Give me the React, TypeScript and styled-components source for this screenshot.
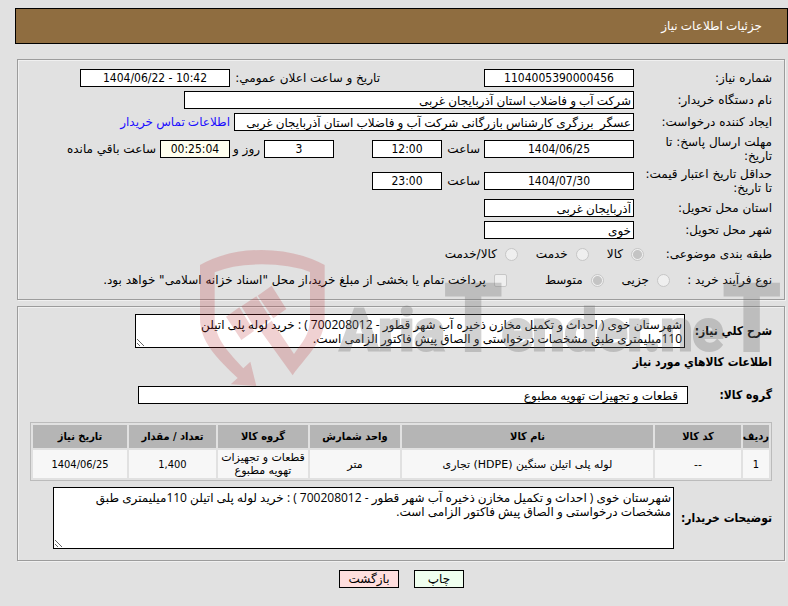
import React from "react";
import styled, { createGlobalStyle } from "styled-components";

const GlobalStyle = createGlobalStyle`
  * { box-sizing: border-box; }
  body {
    margin: 0;
    background: #e1e1e1;
    color: #000;
    font: 12px/14px "DejaVu Sans", sans-serif;
  }
  input, textarea, button { font: inherit; color: inherit; }
`;

const condensed = `"DejaVu Sans Condensed", "DejaVu Sans", sans-serif`;
const valueFont = `"Open Sans", "DejaVu Sans", sans-serif`;

const Page = styled.main`
  position: relative;
  padding: 8px 0 18px;
`;

const TitleBar = styled.header`
  margin-left: 15px;
  height: 36px;
  padding: 0 25px;
  display: flex;
  align-items: center;
  background: #8f6d40;
  border: 1px solid #000;
  color: #fff;
`;

const Title = styled.h1`
  margin: 0;
  font-family: ${valueFont};
  font-size: 12px;
  font-weight: normal;
`;

const Panel = styled.section<{ $top: number; $bottom: number }>`
  margin: ${(p) => p.$top}px 3px 0 17px;
  padding: 7px 12px ${(p) => p.$bottom}px;
  border: 1px solid #9c9c9c;
  box-shadow: inset 1px 1px 0 #f0f0f0, 1px 1px 0 #f0f0f0;
`;

const Row = styled.div<{ $height?: number; $gap?: number }>`
  display: flex;
  align-items: center;
  gap: ${(p) => p.$gap ?? 4}px;
  min-height: ${(p) => p.$height ?? 22}px;
`;

const Label = styled.label<{ $width?: number }>`
  flex: none;
  width: ${(p) => (p.$width ? `${p.$width}px` : "auto")};
  white-space: nowrap;
`;

const StrongLabel = styled(Label)`
  font-family: ${condensed};
  font-weight: bold;
`;

const RowLabel = styled(Label)`
  width: 134px;
  white-space: normal;
`;

const Field = styled.input<{ $width: number; $center?: boolean; $tint?: string; $indent?: number }>`
  width: ${(p) => p.$width}px;
  height: 18px;
  min-width: 0;
  padding: 0 ${(p) => p.$indent ?? 2}px;
  border: 1px solid #000;
  border-radius: 0;
  background: ${(p) => p.$tint ?? "#fff"};
  font-family: ${(p) => (p.$center ? condensed : valueFont)};
  text-align: ${(p) => (p.$center ? "center" : "right")};
  outline: none;
`;

const Area = styled.textarea<{ $width: number; $height: number }>`
  width: ${(p) => p.$width}px;
  height: ${(p) => p.$height}px;
  min-width: 0;
  padding: 3px 2px;
  border: 1px solid #000;
  border-radius: 0;
  background: #fff;
  font-family: ${valueFont};
  overflow: hidden;
  outline: none;
`;

const Link = styled.a`
  color: #1a0dff;
  font-family: ${valueFont};
  text-decoration: none;
  white-space: nowrap;
`;

const AfterGap = styled.div<{ $gap: number }>`
  display: flex;
  align-items: center;
  gap: 4px;
  margin-right: ${(p) => p.$gap}px;
`;

const Options = styled.div`
  display: flex;
  gap: 18px;
`;

const Option = styled.label`
  display: flex;
  align-items: center;
  gap: 8px;
  white-space: nowrap;
`;

const Mark = styled.input`
  appearance: none;
  flex: none;
  width: 13px;
  height: 13px;
  margin: 0;
  border: 1px solid #c6c6c6;
  border-radius: ${(p) => (p.type === "radio" ? "50%" : "2px")};
  background: #efefef;
  &:checked {
    background: radial-gradient(circle, #c4c4c4 0 4px, #efefef 5px);
  }
`;

const Heading = styled.h2`
  margin: 7px 0 0;
  font-family: ${condensed};
  font-size: 12px;
  line-height: 14px;
`;

const GroupRow = styled(Row)`
  margin-top: 15px;
`;

const Goods = styled.table`
  width: 100%;
  margin-top: 16px;
  table-layout: fixed;
  border: 1px solid #bbb;
  border-spacing: 2px;
  font-size: 11px;
  text-align: center;
`;

const Col = styled.col<{ $width?: number }>`
  width: ${(p) => (p.$width ? `${p.$width}px` : "auto")};
`;

const HeadCell = styled.th`
  height: 23px;
  padding: 0;
  background: #b5b5b5;
  font-family: ${condensed};
  white-space: nowrap;
`;

const Cell = styled.td<{ $numeric: boolean }>`
  height: 28px;
  padding: 0;
  background: #f7f7f7;
  font-family: ${(p) => (p.$numeric ? condensed : "inherit")};
  line-height: 13px;
`;

const NoteRow = styled(Row)`
  margin-top: 6px;
`;

const Actions = styled.div`
  display: flex;
  justify-content: center;
  gap: 15px;
  margin: 9px 0 0 15px;
`;

const Action = styled.button<{ $width: number; $tint: string }>`
  width: ${(p) => p.$width}px;
  height: 18px;
  padding: 0;
  border: 1px solid #000;
  background: ${(p) => p.$tint};
`;

const Watermark = styled.svg`
  position: absolute;
  top: 235px;
  right: 0;
  width: 608px;
  height: 165px;
  direction: ltr;
  pointer-events: none;
`;

const WatermarkText = styled.text`
  font-family: Roboto, sans-serif;
  font-weight: bold;
  font-size: 57px;
  fill: rgb(110, 110, 110);
  stroke: rgb(110, 110, 110);
  stroke-width: 3px;
  opacity: 0.3;
`;

const Capital = styled.tspan`
  font-size: 92px;
`;

const columns = [26, 86, undefined, 90, 90, 87, 94];
const heads = ["ردیف", "کد کالا", "نام کالا", "واحد شمارش", "گروه کالا", "تعداد / مقدار", "تاریخ نیاز"];
const goods = [
  ["1", "--", "لوله پلی اتیلن سنگین (HDPE) تجاری", "متر", "قطعات و تجهیزات تهویه مطبوع", "1,400", "1404/06/25"],
];
const description =
  "شهرستان خوی ( احداث و تکمیل مخازن ذخیره آب شهر قطور - 700208012 ) : خرید لوله پلی اتیلن 110میلیمتری طبق مشخصات درخواستی و الصاق پیش فاکتور الزامی است.";

export default function App() {
  return (
    <Page dir="rtl" lang="fa">
      <GlobalStyle />
      <TitleBar>
        <Title>جزئیات اطلاعات نیاز</Title>
      </TitleBar>

      <Panel $top={15} $bottom={6}>
        <Row>
          <RowLabel htmlFor="number">شماره نیاز:</RowLabel>
          <Field id="number" $width={150} $center readOnly value="1104005390000456" />
          <AfterGap $gap={100}>
            <Label $width={146} htmlFor="announced">تاریخ و ساعت اعلان عمومي:</Label>
            <Field id="announced" dir="ltr" $width={150} $center readOnly value="1404/06/22 - 10:42" />
          </AfterGap>
        </Row>
        <Row>
          <RowLabel htmlFor="buyer">نام دستگاه خریدار:</RowLabel>
          <Field id="buyer" $width={450} readOnly value="شرکت آب و فاضلاب استان آذربایجان غربی" />
        </Row>
        <Row>
          <RowLabel htmlFor="creator">ایجاد کننده درخواست:</RowLabel>
          <Field id="creator" $width={400} readOnly value="عسگر  برزگری کارشناس بازرگانی شرکت آب و فاضلاب استان آذربایجان غربی" />
          <Link href="#contact">اطلاعات تماس خریدار</Link>
        </Row>
        <Row $height={32}>
          <RowLabel htmlFor="deadline">مهلت ارسال پاسخ: تا تاریخ:</RowLabel>
          <Field id="deadline" $width={150} $center readOnly value="1404/06/25" />
          <Label $width={34} htmlFor="deadlineHour">ساعت</Label>
          <Field id="deadlineHour" $width={70} $center readOnly value="12:00" />
          <AfterGap $gap={34}>
            <Field id="days" $width={70} $center readOnly value="3" />
            <Label $width={26} htmlFor="days">روز و</Label>
            <Field id="left" $width={70} $center $tint="#ffffef" readOnly value="00:25:04" />
            <Label htmlFor="left">ساعت باقي مانده</Label>
          </AfterGap>
        </Row>
        <Row $height={32}>
          <RowLabel htmlFor="validity">حداقل تاریخ اعتبار قیمت: تا تاریخ:</RowLabel>
          <Field id="validity" $width={150} $center readOnly value="1404/07/30" />
          <Label $width={34} htmlFor="validityHour">ساعت</Label>
          <Field id="validityHour" $width={70} $center readOnly value="23:00" />
        </Row>
        <Row>
          <RowLabel htmlFor="province">استان محل تحویل:</RowLabel>
          <Field id="province" $width={150} readOnly value="آذربایجان غربی" />
        </Row>
        <Row>
          <RowLabel htmlFor="city">شهر محل تحویل:</RowLabel>
          <Field id="city" $width={150} readOnly value="خوی" />
        </Row>
        <Row $height={26} $gap={0}>
          <Label as="span" $width={128}>طبقه بندی موضوعی:</Label>
          <Options>
            <Option><Mark type="radio" name="subject" disabled defaultChecked />کالا</Option>
            <Option><Mark type="radio" name="subject" disabled />خدمت</Option>
            <Option><Mark type="radio" name="subject" disabled />کالا/خدمت</Option>
          </Options>
        </Row>
        <Row $height={26} $gap={0}>
          <Label as="span" $width={102}>نوع فرآیند خرید :</Label>
          <Options>
            <Option><Mark type="radio" name="process" disabled />جزیی</Option>
            <Option><Mark type="radio" name="process" disabled defaultChecked />متوسط</Option>
          </Options>
          <AfterGap $gap={38}>
            <Option>
              <Mark type="checkbox" disabled />
              پرداخت تمام یا بخشی از مبلغ خرید،از محل "اسناد خزانه اسلامی" خواهد بود.
            </Option>
          </AfterGap>
        </Row>
      </Panel>

      <Panel $top={6} $bottom={11}>
        <Row>
          <StrongLabel $width={83} htmlFor="summary">شرح كلي نياز:</StrongLabel>
          <Area id="summary" $width={550} $height={34} readOnly value={description} />
        </Row>
        <Heading>اطلاعات كالاهاي مورد نیاز</Heading>
        <GroupRow>
          <StrongLabel $width={80} htmlFor="group">گروه کالا:</StrongLabel>
          <Field id="group" $width={550} $indent={9} readOnly value="قطعات و تجهیزات تهویه مطبوع" />
        </GroupRow>
        <Goods>
          <colgroup>
            {columns.map((width, i) => <Col key={i} $width={width} />)}
          </colgroup>
          <thead>
            <tr>{heads.map((h) => <HeadCell key={h}>{h}</HeadCell>)}</tr>
          </thead>
          <tbody>
            {goods.map((row) => (
              <tr key={row[0]}>
                {row.map((value, i) => (
                  <Cell key={i} $numeric={/^[\d,/]+$/.test(value)}>{value}</Cell>
                ))}
              </tr>
            ))}
          </tbody>
        </Goods>
        <NoteRow>
          <StrongLabel $width={94} htmlFor="notes">توضیحات خریدار:</StrongLabel>
          <Area id="notes" $width={621} $height={62} readOnly value={description} />
        </NoteRow>
      </Panel>

      <Actions>
        <Action type="button" $width={50} $tint="#efffef">چاپ</Action>
        <Action type="button" $width={60} $tint="#ffdede">بازگشت</Action>
      </Actions>

      <Watermark viewBox="0 0 608 165" aria-hidden="true">
        <g transform="scale(0.33333)" fill="rgb(185,45,52)" fillOpacity="0.22">
          <path d="M60 90Q140 45 245 45Q350 45 434 90V250C434 320 376 366 338 421L240 285L275 257L342 357C366 322 390 300 390 250V111Q330 88 245 88Q160 88 104 112V250C104 315 150 355 190 400L211 380L229 453L152 448L173 429C110 370 60 320 60 250Z" />
          <path d="M138 245L178 217L222 288L184 315ZM184 214L229 184L273 252L227 284ZM233 182L275 152L319 222L280 250Z" />
        </g>
        <WatermarkText x="160" y="115">
          Aria<Capital>T</Capital>ender.ne<Capital>T</Capital>
        </WatermarkText>
      </Watermark>
    </Page>
  );
}
